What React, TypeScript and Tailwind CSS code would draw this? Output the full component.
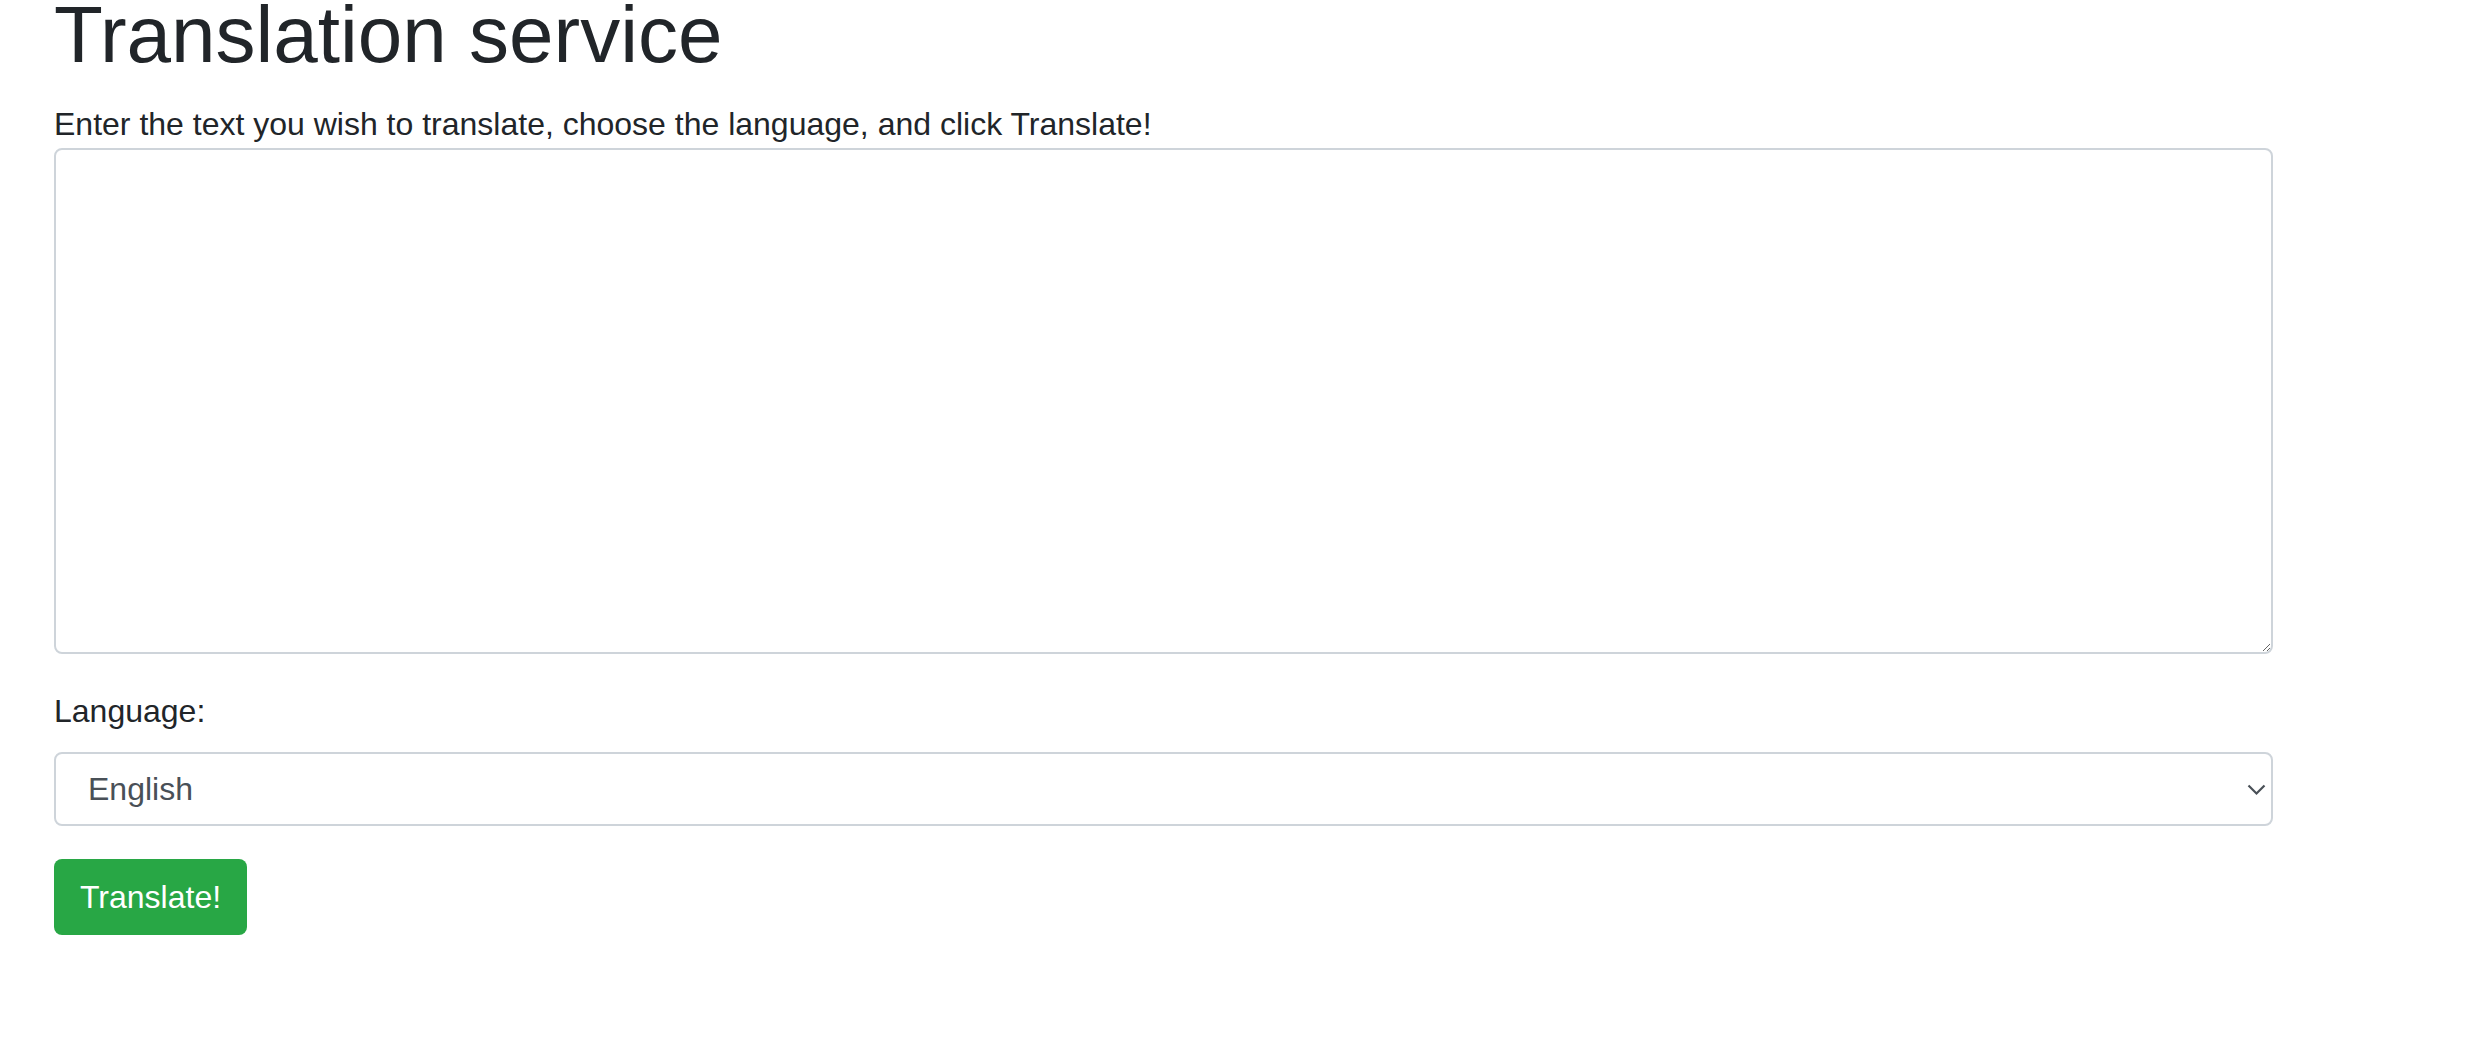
import React from 'react';

const App: React.FC = () => {
  return (
    <div className="min-h-screen bg-white px-[54px] font-['Liberation_Sans',Arial,sans-serif] text-[#212529]">
      <h1 className="text-[80px] leading-[70px] font-normal">Translation service</h1>
      <p className="mt-[30px] text-[32px] leading-[48px]">
        Enter the text you wish to translate, choose the language, and click Translate!
      </p>
      <textarea
        className="block h-[506px] w-[2219px] rounded-[8px] border-2 border-[#ced4da] bg-white px-6 py-3 text-[32px] text-[#495057] outline-none"
      />
      <label className="mt-[33px] block text-[32px] leading-[48px]">Language:</label>
      <div className="relative mt-[17px] w-[2219px]">
        <select className="block h-[74px] w-full appearance-none rounded-[8px] border-2 border-[#ced4da] bg-white pl-[32px] text-[32px] leading-[48px] text-[#495057] outline-none">
          <option>English</option>
          <option>French</option>
          <option>German</option>
          <option>Spanish</option>
        </select>
        <svg
          className="pointer-events-none absolute right-[7px] top-[32px]"
          width="19"
          height="12"
          viewBox="0 0 19 12"
          fill="none"
        >
          <path d="M1.5 1.5 L9.5 9.5 L17.5 1.5" stroke="#495057" strokeWidth="2.2" />
        </svg>
      </div>
      <button className="mt-[33px] flex h-[76px] w-[193px] items-center rounded-[8px] bg-[#28a745] pl-[26px] text-[32px] leading-[48px] text-white">
        Translate!
      </button>
    </div>
  );
};

export default App;
